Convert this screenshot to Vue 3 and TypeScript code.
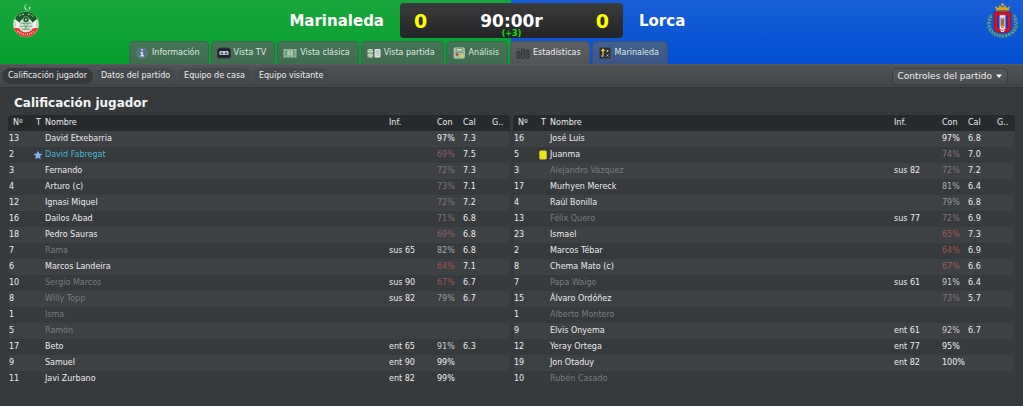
<script setup lang="ts">
import { ref } from 'vue'

interface Player {
  num: number
  name: string
  info?: string
  con?: number
  cal?: string
  off?: boolean
  mark?: 'star' | 'card'
}

const tabs = [
  { id: 'info', label: 'Información' },
  { id: 'tv', label: 'Vista TV' },
  { id: 'classic', label: 'Vista clásica' },
  { id: 'match', label: 'Vista partida' },
  { id: 'analysis', label: 'Análisis' },
  { id: 'stats', label: 'Estadísticas' },
  { id: 'team', label: 'Marinaleda' },
]
const activeTab = ref('stats')

const sections = ['Calificación jugador', 'Datos del partido', 'Equipo de casa', 'Equipo visitante']
const activeSection = ref(sections[0])

const home: Player[] = [
  { num: 13, name: 'David Etxebarria', con: 97, cal: '7.3' },
  { num: 2, name: 'David Fabregat', con: 69, cal: '7.5', mark: 'star' },
  { num: 3, name: 'Fernando', con: 72, cal: '7.3' },
  { num: 4, name: 'Arturo (c)', con: 73, cal: '7.1' },
  { num: 12, name: 'Ignasi Miquel', con: 72, cal: '7.2' },
  { num: 16, name: 'Dailos Abad', con: 71, cal: '6.8' },
  { num: 18, name: 'Pedro Sauras', con: 69, cal: '6.8' },
  { num: 7, name: 'Rama', info: 'sus 65', con: 82, cal: '6.8', off: true },
  { num: 6, name: 'Marcos Landeira', con: 64, cal: '7.1' },
  { num: 10, name: 'Sergio Marcos', info: 'sus 90', con: 67, cal: '6.7', off: true },
  { num: 8, name: 'Willy Topp', info: 'sus 82', con: 79, cal: '6.7', off: true },
  { num: 1, name: 'Isma', off: true },
  { num: 5, name: 'Ramón', off: true },
  { num: 17, name: 'Beto', info: 'ent 65', con: 91, cal: '6.3' },
  { num: 9, name: 'Samuel', info: 'ent 90', con: 99 },
  { num: 11, name: 'Javi Zurbano', info: 'ent 82', con: 99 },
]

const away: Player[] = [
  { num: 16, name: 'José Luis', con: 97, cal: '6.8' },
  { num: 5, name: 'Juanma', con: 74, cal: '7.0', mark: 'card' },
  { num: 3, name: 'Alejandro Vázquez', info: 'sus 82', con: 72, cal: '7.2', off: true },
  { num: 17, name: 'Murhyen Mereck', con: 81, cal: '6.4' },
  { num: 4, name: 'Raúl Bonilla', con: 79, cal: '6.8' },
  { num: 13, name: 'Félix Quero', info: 'sus 77', con: 72, cal: '6.9', off: true },
  { num: 23, name: 'Ismael', con: 65, cal: '7.3' },
  { num: 2, name: 'Marcos Tébar', con: 64, cal: '6.9' },
  { num: 8, name: 'Chema Mato (c)', con: 67, cal: '6.6' },
  { num: 7, name: 'Papa Waigo', info: 'sus 61', con: 91, cal: '6.4', off: true },
  { num: 15, name: 'Álvaro Ordóñez', con: 73, cal: '5.7' },
  { num: 1, name: 'Alberto Montero', off: true },
  { num: 9, name: 'Elvis Onyema', info: 'ent 61', con: 92, cal: '6.7' },
  { num: 12, name: 'Yeray Ortega', info: 'ent 77', con: 95 },
  { num: 19, name: 'Jon Otaduy', info: 'ent 82', con: 100 },
  { num: 10, name: 'Rubén Casado', off: true },
]

const squads = [
  { team: 'Marinaleda', players: home },
  { team: 'Lorca', players: away },
]

function conditionClass(con: number): string {
  if (con < 66) return 'con-worst'
  if (con < 68) return 'con-bad'
  if (con < 71) return 'con-low'
  if (con < 75) return 'con-fair'
  if (con < 81) return 'con-mid'
  if (con < 90) return 'con-good'
  if (con < 95) return 'con-great'
  return 'con-top'
}
</script>

<template>
  <div class="app">
    <header class="banner">
      <div class="score-row">
        <div class="side home">
          <svg class="crest" viewBox="0 0 28 36" role="img" aria-label="Escudo Marinaleda">
            <path d="M15.500 1a3.300 3.300 0 1 0 2 6a3 3 0 0 1-2-6z" fill="#c5edcb" />
            <path d="M17 3l.7 1.500 1.600.2-1.200 1 .3 1.500-1.400-.8z" fill="#d8f3dc" />
            <circle cx="14" cy="22" r="13" fill="#eef3ec" stroke="#9ccca0" stroke-width=".6" />
            <path d="M2.600 16.500A12.500 12.500 0 0 1 25.400 16.500L20 20.500a7 7 0 0 0-12 0z" fill="#145c26" />
            <path d="M1.500 25.500L7 26a8 8 0 0 0 14 0l5.500-.5A13 13 0 0 1 1.500 25.500z" fill="#e93434" />
            <circle cx="14" cy="22.500" r="7" fill="#d3e2d0" />
            <path d="M8.500 21h11M7.500 24h13M9.500 27h9M11 20l5 8M17 20l-5 8" stroke="#6b9a70" stroke-width=".8" />
            <circle cx="14" cy="17" r="3" fill="#174e25" stroke="#b9d2ba" stroke-width=".6" />
            <path d="M12.800 17h2.400M14 15.800v2.400" stroke="#d9ecd9" stroke-width=".7" />
            <path d="M7 13.500l2-1.500M10 12l2-.6M16 11.400l2 .6M19.500 12.500l2 1.500" stroke="#c5dcc5" stroke-width="1" />
            <path d="M3 19v5M25 19v5" stroke="#9aa99a" stroke-width="1.200" stroke-dasharray="1 1" />
            <path d="M5 28.500q9 8 18 0" fill="none" stroke="#ffb5b0" stroke-width="1.600" stroke-dasharray="1.200 1" />
          </svg>
          <h2 class="team">Marinaleda</h2>
        </div>
        <div class="scoreboard">
          <span class="goals">0</span>
          <div class="clock"><span class="time">90:00r</span><span class="added">(+3)</span></div>
          <span class="goals">0</span>
        </div>
        <div class="side away">
          <h2 class="team">Lorca</h2>
          <svg class="crest wide" viewBox="0 0 32 36" role="img" aria-label="Escudo Lorca">
            <path d="M4 12Q-3 25 7 32Q16 37 25 32Q35 25 28 12" fill="none" stroke="#4f9477" stroke-width="2.400" stroke-dasharray="3 .8" />
            <path d="M5 14Q0 25 8 31Q16 35 24 31Q32 25 27 14" fill="none" stroke="#92ba72" stroke-width="1.200" stroke-dasharray="1.500 1.500" />
            <path d="M10 8.500L8 3l4 2 1-3 3 2.500L19 2l1 3 4-2-2 5.500z" fill="#d6a322" />
            <circle cx="16" cy="1.600" r="1.300" fill="#e9b529" />
            <path d="M10 7.700h12" stroke="#8d691a" />
            <path d="M7.500 9.500h17V27q-2 3-8.500 4q-6.500-1-8.500-4z" fill="#d9141f" stroke="#a90d20" />
            <path d="M10.500 12.500h11V25q-1.500 2.500-5.500 3q-4-.5-5.500-3z" fill="#3430b8" />
            <path d="M13 12.500h6V27h-6z" fill="#e4e4f2" />
            <path d="M14 15h1v1h2v-1h1v9h-4z" fill="#92754b" />
            <path d="M14.500 23h3v3h-3z" fill="#e09533" />
            <circle cx="16" cy="28" r="2" fill="#eeeeee" /><path d="M15 28h2" stroke="#555" />
          </svg>
        </div>
      </div>
      <nav class="tabs" aria-label="Vistas">
        <button
          v-for="tab in tabs"
          :key="tab.id"
          type="button"
          class="tab"
          :class="{ active: tab.id === activeTab, blue: tab.id === 'team' }"
          @click="activeTab = tab.id"
        >
          <svg class="tab-icon" viewBox="0 0 14 12" aria-hidden="true">
            <g v-if="tab.id === 'info'">
              <circle cx="7" cy="6" r="5.200" fill="#566f90" stroke="#7189a2" stroke-width=".6" />
              <path d="M6.200 2.300h1.800v1.500H6.200zM5.500 5h2.400v3.300h1v1.200H5.300V8.300h1V6.200h-.8z" fill="#e0e7ed" />
            </g>
            <g v-else-if="tab.id === 'tv'">
              <rect x=".5" y="1" width="13" height="10" rx="2" fill="#1c2227" stroke="#343a40" />
              <rect x="2.500" y="4" width="9" height="4" rx=".6" fill="#bac8d4" />
              <path d="M5 4.800l.5.900.9.200-.7.600.2 1-.9-.5-.9.500.2-1-.7-.6.900-.2zM9 4.800l.5.900.9.200-.7.600.2 1-.9-.5-.9.500.2-1-.7-.6.900-.2z" fill="#2a3138" />
            </g>
            <g v-else-if="tab.id === 'classic'">
              <rect x=".5" y="2" width="13" height="8.500" fill="#9cc09e" />
              <path d="M3.500 2v8.500M7 2v8.500M10.500 2v8.500M.5 4.500h2v3.500h-2M13.500 4.500h-2v3.500h2" fill="none" stroke="#618b6a" stroke-width=".8" />
              <circle cx="7" cy="6.200" r="1.500" fill="none" stroke="#c7dfc6" stroke-width=".7" />
            </g>
            <g v-else-if="tab.id === 'match'">
              <rect x=".5" y="2" width="5.500" height="8.500" fill="#8eb493" />
              <path d="M.5 4.500H6M.5 8H6M2 2.500h2.500M2 10h2.500" stroke="#d4e5d0" />
              <rect x="7.500" y="2" width="6" height="8.500" rx=".8" fill="#e2e5e2" />
              <path d="M8.500 4h4M8.500 6h4M8.500 8h4" stroke="#899991" stroke-width=".7" />
            </g>
            <g v-else-if="tab.id === 'analysis'">
              <rect x="2" y=".8" width="10.500" height="10.500" rx="1" fill="#a1bd9e" stroke="#bed0b8" stroke-width=".6" />
              <path d="M4.500 1.500h5.500v2.500H4.500z" fill="#dce5d3" stroke="#688a67" stroke-width=".7" />
              <path d="M2.500 5.500h9.500" stroke="#688a67" stroke-width=".6" />
              <circle cx="5" cy="7.500" r="1.300" fill="#bd3432" /><circle cx="10" cy="9" r="1.400" fill="#e9dd21" />
            </g>
            <g v-else-if="tab.id === 'stats'">
              <rect x="1" y="4.500" width="3" height="7" rx="1" fill="#45484b" stroke="#2d3033" stroke-width=".8" />
              <rect x="5.500" y="2" width="3" height="9.500" rx="1" fill="#484b4e" stroke="#2d3033" stroke-width=".8" />
              <rect x="10" y="3" width="3" height="8.500" rx="1" fill="#45484b" stroke="#2d3033" stroke-width=".8" />
              <path d="M1 2h3" stroke="#43464a" />
            </g>
            <g v-else>
              <rect x="1.500" y=".7" width="11" height="10.800" rx="1.500" fill="#2c2e31" stroke="#414449" stroke-width=".7" />
              <path d="M5 8V3M3.500 4L5 2.200 6.500 4" fill="none" stroke="#e4d335" stroke-width="1.200" />
              <circle cx="9.500" cy="4" r="1" fill="#c1c2be" />
              <path d="M3.500 8l2 2m0-2l-2 2M8.500 7.500l2 2m0-2l-2 2" stroke="#d6d7d3" stroke-width=".8" />
            </g>
          </svg>
          {{ tab.label }}
        </button>
      </nav>
    </header>

    <div class="toolbar">
      <nav class="sections" aria-label="Secciones">
        <button
          v-for="section in sections"
          :key="section"
          type="button"
          class="pill"
          :class="{ active: section === activeSection }"
          @click="activeSection = section"
        >{{ section }}</button>
      </nav>
      <button type="button" class="controls" aria-haspopup="menu">
        Controles del partido
        <svg class="caret" viewBox="0 0 6 4" aria-hidden="true"><path d="M0 .5h6L3 4z" fill="#fff" /></svg>
      </button>
    </div>

    <main class="content">
      <h1 class="title">{{ activeSection }}</h1>
      <div class="squads">
        <table v-for="squad in squads" :key="squad.team" class="squad" :aria-label="squad.team">
          <colgroup>
            <col class="c-num" /><col class="c-type" /><col /><col class="c-inf" />
            <col class="c-con" /><col class="c-cal" /><col class="c-goals" />
          </colgroup>
          <thead>
            <tr>
              <th>Nº</th><th>T</th><th>Nombre</th><th>Inf.</th><th>Con</th><th>Cal</th><th>G..</th>
            </tr>
          </thead>
          <tbody>
            <tr v-for="p in squad.players" :key="p.num">
              <td>{{ p.num }}</td>
              <td>
                <svg v-if="p.mark === 'star'" class="mark" viewBox="0 0 10 10" role="img" aria-label="Mejor jugador">
                  <path d="M5 .8l1.300 2.800 3.100.4-2.300 2.100.6 3.100L5 7.700 2.300 9.200l.6-3.100L.6 4l3.100-.4z" fill="#85b5ee" />
                </svg>
                <svg v-else-if="p.mark === 'card'" class="mark" viewBox="0 0 10 10" role="img" aria-label="Tarjeta amarilla">
                  <rect x="1.500" y=".8" width="7" height="8.400" rx="1" fill="#f0e51c" stroke="#c9bd19" stroke-width=".6" />
                </svg>
              </td>
              <td :class="{ off: p.off, best: p.mark === 'star' }">{{ p.name }}</td>
              <td>{{ p.info }}</td>
              <td><span v-if="p.con" :class="conditionClass(p.con)">{{ p.con }}%</span></td>
              <td>{{ p.cal }}</td>
              <td></td>
            </tr>
          </tbody>
        </table>
      </div>
    </main>
  </div>
</template>

<style>
body {
  background: #363a3c;
}
</style>

<style scoped>
.app {
  min-height: 100vh;
  background: #363a3c;
  color: #ececec;
  font-family: "DejaVu Sans", sans-serif;
  font-size: 8px;
  line-height: 16px;
}
button {
  font: inherit;
  color: inherit;
  margin: 0;
  cursor: pointer;
  white-space: nowrap;
}
.banner {
  background:
    linear-gradient(rgba(255, 255, 255, 0.08), rgba(255, 255, 255, 0)),
    linear-gradient(90deg, #069f2e 50%, #0450d3 50%);
}
.score-row {
  display: grid;
  grid-template-columns: 1fr 223px 1fr;
  padding-top: 3px;
}
.side {
  display: flex;
  align-items: center;
  justify-content: space-between;
}
.side.home {
  padding: 0 16px 0 12px;
}
.side.away {
  padding: 0 5px 0 16px;
}
.crest {
  width: 28px;
  height: 35px;
}
.crest.wide {
  width: 31px;
}
.team {
  margin: 0;
  font-size: 15px;
  line-height: 18px;
  color: #fff;
}
.scoreboard {
  display: flex;
  justify-content: space-between;
  height: 35px;
  padding: 0 14px;
  box-sizing: border-box;
  border-radius: 4px;
  background: linear-gradient(#3b3b3e, #232426);
  font-weight: bold;
}
.goals {
  color: #ff0;
  font-size: 19px;
  line-height: 36px;
}
.clock {
  display: flex;
  flex-direction: column;
  align-items: center;
}
.time {
  padding-top: 9px;
  font-size: 17px;
  line-height: 18px;
  color: #fff;
}
.added {
  font-size: 8px;
  line-height: 8px;
  color: #0be00b;
}
.tabs {
  display: flex;
  gap: 2px;
  padding: 3px 0 0 129px;
}
.tab {
  display: flex;
  align-items: center;
  gap: 3px;
  height: 23px;
  padding: 0 8px 0 5px;
  border: 1px solid #326d4a;
  border-bottom: 0;
  border-radius: 5px 5px 0 0;
  background: linear-gradient(#467455, #3f6c4e);
  color: #dfe9e1;
}
.tab.blue {
  border-color: #344f80;
  background: linear-gradient(#435f8b, #3b5685);
}
.tab.active {
  border-color: #505458;
  background: linear-gradient(#5d5f62, #525559);
  color: #f0f0f0;
}
.tab-icon {
  width: 14px;
  height: 12px;
}
.toolbar {
  display: flex;
  align-items: center;
  justify-content: space-between;
  box-sizing: border-box;
  height: 24px;
  padding: 0 15px 0 2px;
  border-top: 1px solid #5a5d60;
  border-bottom: 1px solid #323538;
  background: linear-gradient(#515558, #414548);
}
.sections {
  display: flex;
  gap: 2px;
}
.pill {
  height: 16px;
  padding: 0 6px;
  border: 0;
  border-radius: 8px;
  background: #45494c;
}
.pill.active {
  background: #373a3d;
}
.controls {
  display: flex;
  align-items: center;
  gap: 4px;
  height: 17px;
  padding: 0 5px;
  border: 1px solid #3b3e41;
  border-radius: 5px;
  background: linear-gradient(#56595c, #4a4d50);
  font-size: 9px;
  line-height: 15px;
}
.caret {
  width: 6px;
  height: 4px;
}
.content {
  padding: 6px 8px 20px;
}
.title {
  margin: 0;
  padding: 0 6px 3px;
  font-size: 12px;
  line-height: 18px;
  color: #f4f4f4;
}
.squads {
  display: grid;
  grid-template-columns: 1fr 1fr;
  gap: 3px;
}
.squad {
  width: 100%;
  table-layout: fixed;
  border-spacing: 0;
}
.c-num { width: 25px; }
.c-type { width: 12px; }
.c-inf { width: 48px; }
.c-con { width: 26px; }
.c-cal { width: 29px; }
.c-goals { width: 18px; }
th,
td {
  height: 16px;
  padding: 0;
  text-align: left;
  font-weight: normal;
  white-space: nowrap;
}
th {
  background: #272a2d;
}
th:first-child {
  padding-left: 5px;
  border-top-left-radius: 4px;
}
th:nth-child(2) {
  padding-left: 3px;
}
th:last-child {
  border-top-right-radius: 4px;
}
td {
  background-clip: padding-box;
}
td:first-child {
  border-left: 1px solid transparent;
}
td:last-child {
  border-right: 1px solid transparent;
}
tbody tr:nth-child(odd) td {
  background-color: #3e4144;
}
.mark {
  display: block;
  width: 10px;
  height: 10px;
}
.off { color: #797c7e; }
.best { color: #47b6d2; }
.con-worst { color: #a05353; }
.con-bad { color: #985a5a; }
.con-low { color: #8c6365; }
.con-fair { color: #817476; }
.con-mid { color: #979799; }
.con-good { color: #acaeaf; }
.con-great { color: #cccdce; }
.con-top { color: #f2f2f2; }
</style>
